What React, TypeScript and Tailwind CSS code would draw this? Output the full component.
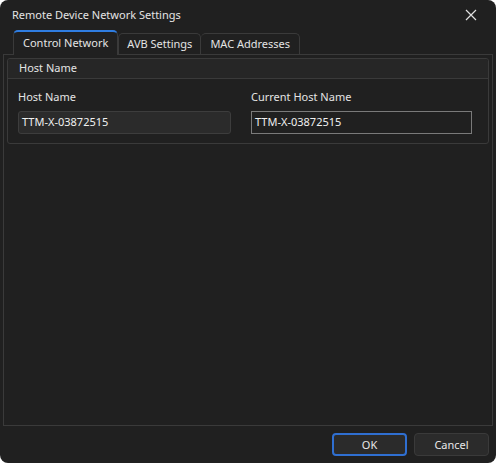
export default function App() {
  return (
    <div className="w-[496px] h-[463px] bg-white">
      <div
        className="w-full h-full bg-[#202020] rounded-[8px] flex flex-col text-[#e4e4e4] text-[11px] overflow-hidden"
        style={{ fontFamily: '"Noto Sans", "Open Sans", sans-serif' }}
      >
        {/* title bar */}
        <div className="h-[29px] flex items-center justify-between pl-[12px] pr-[19px] shrink-0">
          <span className="leading-none">Remote Device Network Settings</span>
          <svg width="12" height="12" viewBox="0 0 12 12" className="text-[#e0e0e0]">
            <path d="M1 1L11 11M11 1L1 11" stroke="currentColor" strokeWidth="1.2" />
          </svg>
        </div>

        {/* tabs */}
        <div className="h-[25px] flex items-end pl-[13px] shrink-0">
          <div className="h-[25px] px-[9px] flex items-center bg-[#202020] border border-b-0 border-[#3a3a3a] border-t-2 border-t-[#2f7de1] rounded-t-[5px] relative top-[1px]">
            Control Network
          </div>
          <div className="h-[21px] px-[8px] flex items-center border border-b-0 border-[#3a3a3a] rounded-t-[5px]">
            AVB Settings
          </div>
          <div className="h-[21px] px-[9px] flex items-center border border-b-0 border-l-0 border-[#3a3a3a] rounded-t-[5px]">
            MAC Addresses
          </div>
        </div>

        {/* pane */}
        <div className="mx-[3px] h-[372px] border border-[#3a3a3a] px-[3px] pt-[3px] shrink-0">
          <div className="border border-[#3a3a3a] rounded-[3px]">
            <div className="h-[20px] flex items-center px-[11px] bg-[#262626] border-b border-[#3a3a3a] rounded-t-[3px]">
              Host Name
            </div>
            <div className="flex pl-[10px] pt-[10px] pb-[9px]">
              <div className="w-[233px] flex flex-col">
                <span className="h-[16px] leading-[16px]">Host Name</span>
                <div className="mt-[6px] w-[213px] h-[23px] bg-[#2b2b2b] border border-[#3d3d3d] rounded-[3px] flex items-center px-[3px] text-[#f0f0f0]">
                  TTM-X-03872515
                </div>
              </div>
              <div className="flex flex-col">
                <span className="h-[16px] leading-[16px]">Current Host Name</span>
                <div className="mt-[6px] w-[221px] h-[23px] bg-[#202020] border border-[#7a7a7a] flex items-center px-[3px] text-[#f0f0f0]">
                  TTM-X-03872515
                </div>
              </div>
            </div>
          </div>
        </div>

        {/* footer */}
        <div className="flex justify-end gap-[7px] pr-[7px] pt-[7px]">
          <button className="w-[75px] h-[23px] bg-[#2b2b2b] border-2 border-[#2f6fd1] rounded-[4px] text-[#e8e8e8] leading-none">
            OK
          </button>
          <button className="w-[75px] h-[23px] bg-[#2b2b2b] border border-[#3a3a3a] rounded-[4px] text-[#e8e8e8] leading-none">
            Cancel
          </button>
        </div>
      </div>
    </div>
  );
}
